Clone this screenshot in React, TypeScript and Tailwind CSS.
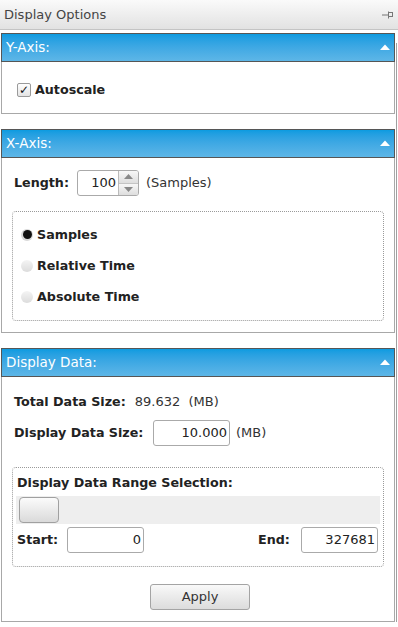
import React from 'react'

const body = { fontFamily: '"DejaVu Sans", Verdana, sans-serif' }

function PanelHeader({ title }: { title: string }) {
  return (
    <div className="flex h-[29px] items-center justify-between border border-[#565656] bg-gradient-to-b from-[#0b9be0] to-[#5db6e7] pl-[4px] pr-[4px]">
      <span className="text-[13.5px] text-white">{title}</span>
      <svg width="10" height="6" viewBox="0 0 10 6" className="mb-[1px]">
        <path d="M0 6 L5 0.5 L10 6 Z" fill="#ffffff" />
      </svg>
    </div>
  )
}

function Radio({ label, checked }: { label: string; checked?: boolean }) {
  return (
    <div className="flex h-[31px] items-center gap-[4px]">
      {checked ? (
        <span className="flex h-[12px] w-[12px] items-center justify-center rounded-full bg-[#d8d8d8]">
          <span className="h-[9px] w-[9px] rounded-full bg-[#111]" />
        </span>
      ) : (
        <span className="h-[12px] w-[12px] rounded-full bg-gradient-to-b from-[#f4f4f4] to-[#dcdcdc]" />
      )}
      <span className="text-[12.7px] font-bold text-[#222]">{label}</span>
    </div>
  )
}

function NumberBox({ value, className }: { value: string; className: string }) {
  return (
    <div
      className={
        'flex items-center justify-end rounded-[3px] border border-[#aaaaaa] bg-white pr-[2px] text-[13px] text-[#222] ' +
        className
      }
    >
      {value}
    </div>
  )
}

export default function App() {
  return (
    <div className="h-[627px] w-[398px] overflow-hidden bg-white text-[#222]" style={body}>
      {/* title bar */}
      <div className="flex h-[30px] items-center justify-between border-b border-[#c4c4c4] bg-gradient-to-b from-[#fafafa] to-[#e2e2e2] pl-[4px] pr-[5px]">
        <span className="text-[13px] text-[#444]">Display Options</span>
        <svg width="11" height="8" viewBox="0 0 11 8" className="mt-[1px]">
          <path d="M0 4 H6" stroke="#777" strokeWidth="1" />
          <path d="M6.5 0.5 V7.5" stroke="#777" strokeWidth="1" />
          <rect x="6.5" y="1.5" width="4" height="4" fill="none" stroke="#777" strokeWidth="1" />
        </svg>
      </div>

      <div className="flex">
        <div className="ml-px mt-[3px] flex w-[394px] flex-col">
          {/* Y axis */}
          <PanelHeader title="Y-Axis:" />
          <div className="h-[52px] border-x border-b border-[#a8a8a8] pl-[15px] pt-[18px]">
            <div className="flex items-center gap-[4px]">
              <span className="flex h-[14px] w-[14px] items-center justify-center rounded-[2px] border border-[#9a9a9a] bg-gradient-to-b from-[#ffffff] to-[#e4e4e4] text-[12px] leading-none text-[#111]">
                ✓
              </span>
              <span className="text-[12.7px] font-bold">Autoscale</span>
            </div>
          </div>

          {/* X axis */}
          <div className="mt-[15px]">
            <PanelHeader title="X-Axis:" />
          </div>
          <div className="border-x border-b border-[#a8a8a8] px-[10px] pb-[11px] pt-[12px]">
            <div className="flex h-[26px] items-center pl-[2px]">
              <span className="w-[63px] text-[12.7px] font-bold">Length:</span>
              <div className="flex h-[26px] w-[62px] overflow-hidden rounded-[3px] border border-[#aaaaaa] bg-white">
                <div className="flex flex-1 items-center justify-end pr-[2px] text-[13px]">100</div>
                <div className="flex w-[20px] flex-col border-l border-[#bbbbbb]">
                  <div className="flex flex-1 items-center justify-center border-b border-[#c4c4c4] bg-gradient-to-b from-[#f7f7f7] to-[#dedede]">
                    <svg width="9" height="5" viewBox="0 0 9 5">
                      <path d="M0 5 L4.5 0 L9 5 Z" fill="#888" />
                    </svg>
                  </div>
                  <div className="flex flex-1 items-center justify-center bg-gradient-to-b from-[#f7f7f7] to-[#dedede]">
                    <svg width="9" height="5" viewBox="0 0 9 5">
                      <path d="M0 0 L4.5 5 L9 0 Z" fill="#888" />
                    </svg>
                  </div>
                </div>
              </div>
              <span className="ml-[7px] text-[13px] text-[#333]">(Samples)</span>
            </div>

            <div className="mt-[15px] h-[110px] rounded-[4px] border border-dotted border-[#9a9a9a] pl-[8px] pt-[7px]">
              <Radio label="Samples" checked />
              <Radio label="Relative Time" />
              <Radio label="Absolute Time" />
            </div>
          </div>

          {/* Display data */}
          <div className="mt-[15px]">
            <PanelHeader title="Display Data:" />
          </div>
          <div className="h-[245px] border-x border-b border-[#a8a8a8] px-[10px] pt-[15px]">
            <div className="flex h-[20px] items-center pl-[2px]">
              <span className="text-[12.7px] font-bold">Total Data Size:</span>
              <span className="ml-[9px] text-[13px] text-[#333]">89.632&nbsp;&nbsp;(MB)</span>
            </div>
            <div className="mt-[8px] flex h-[26px] items-center pl-[2px]">
              <span className="w-[139px] text-[12.7px] font-bold">Display Data Size:</span>
              <NumberBox value="10.000" className="h-[26px] w-[77px]" />
              <span className="ml-[6px] text-[13px] text-[#333]">(MB)</span>
            </div>

            <div className="mt-[21px] h-[100px] rounded-[4px] border border-dotted border-[#9a9a9a] px-[3px] pt-[5px]">
              <div className="pl-[1px] text-[12.7px] font-bold leading-[20px]">Display Data Range Selection:</div>
              <div className="mt-[3px] flex h-[28px] items-center bg-[#eeeeee] pl-[3px]">
                <div className="h-[26px] w-[40px] rounded-[4px] border border-[#a0a0a0] bg-gradient-to-b from-[#fbfbfb] to-[#dadada]" />
              </div>
              <div className="mt-[3px] flex h-[26px] items-center pl-[1px] pr-[2px]">
                <span className="w-[50px] text-[12.7px] font-bold">Start:</span>
                <NumberBox value="0" className="h-[26px] w-[77px]" />
                <span className="ml-auto w-[43px] text-[12.7px] font-bold">End:</span>
                <NumberBox value="327681" className="h-[26px] w-[77px]" />
              </div>
            </div>

            <div className="mt-[17px] flex">
              <div className="ml-[138px] flex h-[26px] w-[100px] items-center justify-center rounded-[3px] border border-[#a4a4a4] bg-gradient-to-b from-[#f9f9f9] to-[#dcdcdc] text-[13px] text-[#333]">
                Apply
              </div>
            </div>
          </div>
        </div>
        <div className="ml-[1px] mt-[13px] w-px self-stretch bg-[#a0a0a0]" />
      </div>
    </div>
  )
}
